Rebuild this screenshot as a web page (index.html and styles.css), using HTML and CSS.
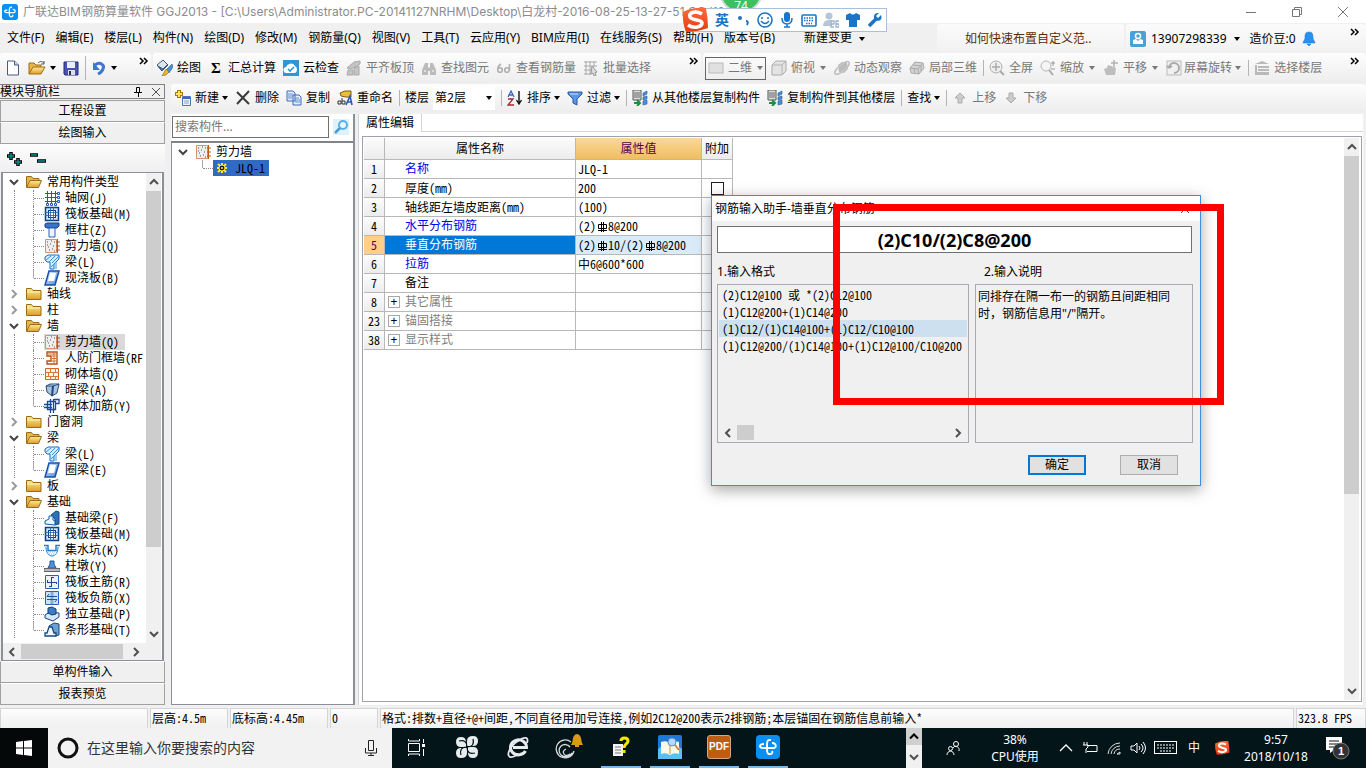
FILE: index.html
```html
<!DOCTYPE html>
<html lang="zh-CN">
<head>
<meta charset="utf-8">
<title>广联达BIM钢筋算量软件 GGJ2013</title>
<link rel="stylesheet" href="styles.css">
</head>
<body>
<svg class="defs" aria-hidden="true">
<defs>
<linearGradient id="gold" x1="0" y1="0" x2="0" y2="1"><stop offset="0" stop-color="#ffe9a0"/><stop offset="1" stop-color="#dd9d22"/></linearGradient>
<linearGradient id="bluey" x1="0" y1="0" x2="1" y2="1"><stop offset="0" stop-color="#e4f3ff"/><stop offset="1" stop-color="#3f86d8"/></linearGradient>
<linearGradient id="sg" x1="0" y1="0" x2="0" y2="1"><stop offset="0" stop-color="#ff6a3c"/><stop offset="1" stop-color="#e83a10"/></linearGradient>
</defs>
<symbol id="logo" viewBox="0 0 24 24"><rect width="24" height="24" rx="4" fill="#0a90f0"/><path d="M15 5q-4-1-4 4v6q0 5 4 4 2-1 1-3M8 9q-4 0-4 2t3 2h11q3-1 1-4-1-1-3-1" fill="none" stroke="#fff" stroke-width="1.900"/></symbol>
<symbol id="new" viewBox="0 0 16 16"><path d="M2.500 1h7l4 4v10h-11z" fill="#fff" stroke="#4a5a78"/><path d="M9.500 1v4h4" fill="#ccd8ec" stroke="#4a5a78"/></symbol>
<symbol id="open" viewBox="0 0 18 16"><path d="M1 14V3h5l2 2h5v3" fill="#e8b54a" stroke="#a06c10"/><path d="M1 14l4-7h12l-4 7z" fill="url(#gold)" stroke="#a06c10"/><path d="M10 3c2-2 4-2 6 0m0-2v3h-3" fill="none" stroke="#555"/></symbol>
<symbol id="save" viewBox="0 0 16 16"><path d="M1 2h14v13H2l-1-1z" fill="#4a50b8" stroke="#252a80"/><path d="M4 2h8v6H4z" fill="#e8eefa"/><path d="M5 10h7v5H5z" fill="#dde"/><path d="M6 11h2v4H6z" fill="#333"/></symbol>
<symbol id="undo" viewBox="0 0 16 16"><path d="M4 5c5-4 10 0 8 4-1 3-3 4-5 5" fill="none" stroke="#3c78d0" stroke-width="3"/><path d="M2 2v8h7z" fill="#3c78d0"/></symbol>
<symbol id="paint" viewBox="0 0 16 16"><path d="M0 5l6-5 5 5-6 6z" fill="#dbe6f2" stroke="#3c5878"/><path d="M1 6l5 3 4-4-5 6z" stroke="#3c5878" fill="#4f7fae"/><path d="M15 4l-6 6 3 3 4-6z" fill="#4b8fd2" stroke="#2b5c90" stroke-width=".6"/><path d="M9 9l3 3-3 3-4 1z" fill="#edb52e" stroke="#8a6a10" stroke-width=".6"/></symbol>
<symbol id="cloud" viewBox="0 0 16 16"><rect width="16" height="16" fill="#2c97d8"/><path d="M4 13a3 3 0 0 1-1-6 5 5 0 0 1 9-1 4 4 0 0 1 0 7z" fill="#fff"/><path d="M5 9l2 2 4-4" stroke="#2c97d8" stroke-width="1.600" fill="none"/></symbol>
<symbol id="level" viewBox="0 0 16 16"><path d="M1 8l7-6 6-1v3L5 9zM2 10h5v5H1zM8 8l5-2v9H8z" fill="#c4c4c4" stroke="#aaa"/></symbol>
<symbol id="find" viewBox="0 0 16 16"><path d="M4 3h3v4l1 1 1-1V3h3l3 7v5H9v-4H7v4H1v-5z" fill="#bbb"/><path d="M3 11h2M11 11h2" stroke="#fff"/></symbol>
<symbol id="glasses" viewBox="0 0 16 16"><g fill="none" stroke="#b0b0b0" stroke-width="1.600"><circle cx="4" cy="10" r="2.300"/><circle cx="11" cy="10" r="2.300"/><path d="M2 9c0-3 1-4 3-5M13.500 10V4"/></g></symbol>
<symbol id="batch" viewBox="0 0 16 16"><path d="M1 2h13M1 6h13M1 10h8M1 14h7M3 1v14M7 1v14M11 1v6" stroke="#aaa" fill="none"/><path d="M9 6l5 6-2 .5 1 3-2 .5-1-3-2 1z" fill="#ddd" stroke="#999"/></symbol>
<symbol id="plane" viewBox="0 0 16 16"><rect x="1" y="3" width="14" height="10" fill="#e0e0e0" stroke="#bbb"/></symbol>
<symbol id="cube" viewBox="0 0 16 16"><path d="M1 5l4-4h10v10l-4 4H1z" fill="#e3e3e3" stroke="#aaa"/><path d="M1 5h10v10M11 5l4-4" fill="none" stroke="#b4b4b4"/></symbol>
<symbol id="orbit" viewBox="0 0 16 16"><path d="M4 5l4-3 5 1 1 6-4 4-5-1z" fill="#bbb"/><ellipse cx="8" cy="8" rx="9" ry="3" fill="none" stroke="#c4c4c4" stroke-width="1.600" transform="rotate(-40 8 8)"/></symbol>
<symbol id="local" viewBox="0 0 16 16"><path d="M1 8l5-6 8 1 1 5-5 6-8-1z" fill="#d4d4d4" stroke="#aaa"/><path d="M1 8l8 1 1 5M9 9l5-6M5 8l1 5M4 5l8 1v5" fill="none" stroke="#aaa"/></symbol>
<symbol id="full" viewBox="0 0 16 16"><circle cx="7" cy="7" r="6" fill="#eee" stroke="#b0b0b0"/><path d="M7 3v8M3 7h8" stroke="#aaa" stroke-width="1.500"/><path d="M11 11l4 4" stroke="#aaa" stroke-width="2"/></symbol>
<symbol id="zoom" viewBox="0 0 16 16"><circle cx="6" cy="6" r="5" fill="#f4f4f4" stroke="#b8b8b8"/><path d="M9 10l4 5" stroke="#aaa" stroke-width="2"/><path d="M13 1v5M11 3h4M11 9h4" stroke="#999"/></symbol>
<symbol id="pan" viewBox="0 0 16 16"><path d="M3 15l-2-6 3-1 1-3 3 1 5 2-1 7z" fill="#bdbdbd"/><path d="M11 0v7M8 3h7" stroke="#b0b0b0" stroke-width="1.500"/></symbol>
<symbol id="rot" viewBox="0 0 16 16"><rect x="1" y="1" width="14" height="14" fill="#f0f0f0" stroke="#bbb"/><path d="M3 8a5 5 0 1 1 5 5M3 8l-2-2M3 8l3-2" fill="none" stroke="#aaa" stroke-width="2"/></symbol>
<symbol id="floors" viewBox="0 0 16 16"><path d="M8 1l7 3H1zM4 6h11v2H4zM4 9h11v2H4zM1 12h14v3H1zM1 5h2v7H1z" fill="#b9b9b9"/></symbol>
<symbol id="add" viewBox="0 0 16 16"><path d="M4 0v8M0 4h8" stroke="#a87800" stroke-width="4"/><path d="M4 1v6M1 4h6" stroke="#ffe45a" stroke-width="2"/><path d="M7.500 6.500h8v9h-8z" fill="#eaf2ff" stroke="#4c76bc"/><path d="M8 8h7" stroke="#3a68b8" stroke-width="2"/><path d="M9 11h5M9 13h5" stroke="#8aa"/></symbol>
<symbol id="del" viewBox="0 0 16 16"><path d="M2 2l12 12M14 1L2 14" stroke="#3c3c3c" stroke-width="2"/></symbol>
<symbol id="copy" viewBox="0 0 16 16"><path d="M1 1h6l2 2v8H1zM7 5h6l2 2v8H7z" fill="#e7f0ff" stroke="#3a68b8"/><path d="M2 4h5M2 6h5M2 8h4M9 8h4M9 10h5M9 12h5" stroke="#5c8ad4"/></symbol>
<symbol id="rename" viewBox="0 0 16 16"><path d="M3 3l5-2h6v6H9L4 6z" fill="#e9bf3c" stroke="#7a6010"/><path d="M9 15l4-9 2 9M10 12h4" fill="none" stroke="#2c58b8" stroke-width="1.600"/><path d="M1 11h3v3H1zM5 8v6h3v-3H5" fill="none" stroke="#333"/></symbol>
<symbol id="sort" viewBox="0 0 16 16"><path d="M1 7l3-6 3 6M2 5h4" fill="none" stroke="#3868b8" stroke-width="1.300"/><path d="M1 9h5l-5 6h6" fill="none" stroke="#a02830" stroke-width="1.300"/><path d="M12 1v12M9.500 10l2.500 4 2.500-4" fill="none" stroke="#111" stroke-width="1.400"/></symbol>
<symbol id="filter" viewBox="0 0 16 16"><path d="M1 2h14v2l-5 5v6l-4-2V9L1 4z" fill="#5a96e4" stroke="#2458a8"/><path d="M3 4h8" stroke="#c8e0ff"/></symbol>
<symbol id="fcopy" viewBox="0 0 16 16"><path d="M1 0h8v10H1z" fill="#ddd" stroke="#555"/><path d="M2 3h6M2 5h6M2 7h6" stroke="#666"/><path d="M11 3l4-2v3l-4 2zM11 7l4-1v3l-4 1zM11 11l4-1v4l-4 1z" fill="#4a90d8" stroke="#265a98" stroke-width=".6"/><path d="M2 13h5M5 10l3 3-3 3" stroke="#1c9040" stroke-width="2" fill="none"/></symbol>
<symbol id="up" viewBox="0 0 16 16"><path d="M8 3l5 5h-3v5H6V8H3z" fill="#ccc" stroke="#aaa"/></symbol>
<symbol id="down" viewBox="0 0 16 16"><path d="M8 13l5-5h-3V3H6v5H3z" fill="#ccc" stroke="#aaa"/></symbol>
<symbol id="fo" viewBox="0 0 16 16"><path d="M.5 13V2.500h5l1.500 2h6V7" fill="#e8b54a" stroke="#9c6c14"/><path d="M.5 13.500L4 6.500h11.500l-3 7z" fill="url(#gold)" stroke="#9c6c14"/></symbol>
<symbol id="fc" viewBox="0 0 16 16"><path d="M.5 13.500V2.500h5l1.500 2h8v9z" fill="url(#gold)" stroke="#9c6c14"/><path d="M1 6h13" stroke="#fff0b8"/></symbol>
<symbol id="grid" viewBox="0 0 16 16"><path d="M3.500 1v12M7.500 1v12M11.500 1v12M1 3.500h12M1 7.500h12M1 11.500h12" stroke="#2458c0"/><path d="M13.500 2.500h2v2h-2zM13.500 6.500h2v2h-2zM13.500 10.500h2v2h-2zM2.500 13.500h2v2h-2zM6.500 13.500h2v2h-2zM10.500 13.500h2v2h-2z" fill="#fff" stroke="#2458c0"/></symbol>
<symbol id="raft" viewBox="0 0 16 16"><rect x="1.500" y="1.500" width="13" height="13" fill="#cfe4fa" stroke="#0c4088" stroke-width="1.500"/><rect x="4.500" y="4.500" width="7" height="7" fill="#fff" stroke="#0c4088"/><path d="M6.500 1v14M9.500 1v14M1 6.500h14M1 9.500h14" stroke="#2060a8" stroke-width=".8"/></symbol>
<symbol id="col" viewBox="0 0 16 16"><path d="M1 2l2-1h12v3l-2 2H3L1 5z" fill="#3a74c8" stroke="#173f88"/><path d="M5 6h6v9H5z" fill="#eaf3ff" stroke="#2c64b8"/></symbol>
<symbol id="wall" viewBox="0 0 16 16"><path d="M1.500 1.500h11v13h-11z" fill="#eee" stroke="#d89070"/><path d="M3 4h1M6 6h1M4 9h1M8 11h1M10 4h1M9 8h1M5 12h1M10 13h1M3 7h1M7 3h1" stroke="#555"/><path d="M13.500 1v14M12 4h4M12 8h4M12 12h4" stroke="#b05c18"/></symbol>
<symbol id="beam" viewBox="0 0 16 16"><path d="M1 3l3-2h11v4l-5 5v5H6V8H3L1 6z" fill="#d5ecff" stroke="#1870c0"/><path d="M2 6l5-4M5 8l6-6M8 9l7-7M7 13l5-5v7" stroke="#3a94dc" fill="none"/></symbol>
<symbol id="slab" viewBox="0 0 16 16"><path d="M5 1h10l-4 14H1z" fill="url(#bluey)" stroke="#1a4fa8" stroke-width="1.500"/><path d="M6 3h6l-2 8H4z" fill="#fff"/></symbol>
<symbol id="frame" viewBox="0 0 16 16"><path d="M3 2h10v12H3v-3h4V6H3z" fill="#fff" stroke="#b85018" stroke-width="1.400"/><path d="M4 4h8M8 6h4M8 8.500h4M5 11h7M10 2v12" stroke="#cc7038"/></symbol>
<symbol id="brick" viewBox="0 0 16 16"><path d="M1.500 2.500h13v11h-13z" fill="#fff3e4" stroke="#c86424"/><path d="M1 6.500h14M1 10.500h14M6.500 2v4M11.500 2v4M4.500 6v4M9.500 6v4M6.500 10v4M11.500 10v4" stroke="#d87838"/></symbol>
<symbol id="dark" viewBox="0 0 16 16"><path d="M2 4l4-2h9l-2 9-5 3-5-4z" fill="#a9c4de" stroke="#2a4a78"/><path d="M2 4h7l6-2" fill="#e4f0fa" stroke="#1f467c"/><path d="M9 4L8 14" stroke="#1f467c" stroke-width="2"/></symbol>
<symbol id="ybar" viewBox="0 0 16 16"><path d="M3.500 3.500h8v8h-8zM0 6.500h8M0 9.500h8M6.500 1v14M9.500 1v14M10 1.500h5v4h-3" fill="none" stroke="#1848a0" stroke-width="1.300"/></symbol>
<symbol id="fbeam" viewBox="0 0 16 16"><path d="M7 5l5-4 3 1v12l-4 1V9z" fill="#2c70b8" stroke="#174880"/><path d="M1 14v-3l4-2V6h4v4l2 1v4z" fill="#eaf4ff" stroke="#175aa0"/></symbol>
<symbol id="pit" viewBox="0 0 16 16"><path d="M0 3.500h4v5h8v-5h4" fill="none" stroke="#2080c8" stroke-width="1.500"/><path d="M2 5c0 12 12 12 12 0" fill="none" stroke="#2080c8"/><path d="M4 10h8M5 12h6" stroke="#78b4e8" stroke-dasharray="1 1"/></symbol>
<symbol id="pier" viewBox="0 0 16 16"><path d="M6 3h4v3l2 4H4l2-4z" fill="#4a94dc" stroke="#2058a0"/><path d="M0 10.500h16v3H0z" fill="#bbb" stroke="#666"/></symbol>
<symbol id="rmain" viewBox="0 0 16 16"><path d="M1.500 1.500h13v13h-13z" fill="#e8f3ff" stroke="#2c60c0"/><path d="M7.500 3v10M3 8.500h10M7.500 3.500H10M5 12.500h3M3.500 8v-2M12.500 8v2" stroke="#1c48a0" fill="none"/></symbol>
<symbol id="rneg" viewBox="0 0 16 16"><path d="M1.500 1.500h13v13h-13z" fill="#cfe2f8" stroke="#2c60c0"/><path d="M8 2v12" stroke="#8cacd0" stroke-width="3"/><path d="M3 6.500h10M3 9.500h10M5 4l-2 2.500M11 12l2-2.500" stroke="#1c5898" fill="none"/></symbol>
<symbol id="ind" viewBox="0 0 16 16"><path d="M1 9l5-3 9 1v4l-6 4-8-3z" fill="#d4e8fa" stroke="#174880"/><path d="M4 2l4-1 4 2v5l-4 1-4-2z" fill="#3c7cc0" stroke="#123c70"/></symbol>
<symbol id="strip" viewBox="0 0 16 16"><path d="M5 4l5-3 5 1v11l-4 1z" fill="#6ba0d0" stroke="#174880"/><path d="M1 14v-3h2l2-6h3l2 6h2v3z" fill="#eef6ff" stroke="#174880" stroke-width="1.300"/></symbol>
<symbol id="gear" viewBox="0 0 16 16"><path d="M8 3v10M3 8h10M4 4l8 8M12 4l-8 8" stroke="#ffee30" stroke-width="2"/><circle cx="8" cy="8" r="3" fill="#222" stroke="#ffee30"/><circle cx="8" cy="8" r="1" fill="#ffee30"/></symbol>
<symbol id="mag" viewBox="0 0 16 16"><rect width="16" height="16" fill="#dff2fc"/><circle cx="10" cy="6" r="4" fill="#eaf7ff" stroke="#58b0e4" stroke-width="2"/><path d="M7 9l-5 5" stroke="#4a9ad8" stroke-width="2.500"/></symbol>
<symbol id="chevd" viewBox="0 0 10 10"><path d="M1 3l4 4 4-4" fill="none" stroke="currentColor" stroke-width="2"/></symbol>
<symbol id="chevr" viewBox="0 0 10 10"><path d="M3 1l4 4-4 4" fill="none" stroke="currentColor" stroke-width="2"/></symbol>
<symbol id="chevl" viewBox="0 0 10 10"><path d="M7 1L3 5l4 4" fill="none" stroke="currentColor" stroke-width="2"/></symbol>
<symbol id="chevu" viewBox="0 0 10 10"><path d="M1 7l4-4 4 4" fill="none" stroke="currentColor" stroke-width="2"/></symbol>
<symbol id="pin" viewBox="0 0 10 10"><path d="M3.500.5h3v5h-3zM1 5.500h8M5.500 6v4M6.500 1v5" fill="none" stroke="#000"/></symbol>
<symbol id="x" viewBox="0 0 10 10"><path d="M1 1l8 8M9 1L1 9" stroke="currentColor" fill="none"/></symbol>
<symbol id="more" viewBox="0 0 10 8"><path d="M1 1l3 3-3 3M5 1l3 3-3 3" fill="none" stroke="#000" stroke-width="1.500"/></symbol>
<symbol id="rebar" viewBox="0 0 12 12"><path d="M2.500 3.500h8v4h-8zM5.500 1v10M7.500 1v10M2 9.500h9" fill="none" stroke="#000"/></symbol>
<symbol id="sogou" viewBox="0 0 28 28"><path d="M2 6Q12 1 25 2q2 11 2 20-11 4-22 4Q1 16 2 6z" fill="url(#sg)"/><path d="M21 8C14 4 7 7 9 11s12 2 12 6-8 6-14 2" fill="none" stroke="#fff" stroke-width="3.600"/></symbol>
</svg>

<header class="titlebar">
  <svg class="ic"><use href="#logo"/></svg>
  <h1 class="title">广联达BIM钢筋算量软件 GGJ2013 - [C:\Users\Administrator.PC-20141127NRHM\Desktop\白龙村-2016-08-25-13-27-51.GGJ12]</h1>
  <div class="winbtns">
    <button aria-label="最小化"><svg viewBox="0 0 12 12"><path d="M1 6.500h10" stroke="#777"/></svg></button>
    <button aria-label="还原"><svg viewBox="0 0 12 12"><path d="M1.500 3.500h7v7h-7zM3.500 3.500v-2h7v7h-2" fill="none" stroke="#777"/></svg></button>
    <button aria-label="关闭"><svg viewBox="0 0 12 12"><path d="M1 1l10 10M11 1L1 11" stroke="#777"/></svg></button>
  </div>
</header>

<div class="menurow">
  <nav class="menu">
    <button>文件(F)</button><button>编辑(E)</button><button>楼层(L)</button><button>构件(N)</button><button>绘图(D)</button><button>修改(M)</button><button>钢筋量(Q)</button><button>视图(V)</button><button>工具(T)</button><button>云应用(Y)</button><button>BIM应用(I)</button><button>在线服务(S)</button><button>帮助(H)</button><button>版本号(B)</button><button class="change">新建变更 <i class="arr"></i></button>
  </nav>
  <a class="tip" href="#">如何快速布置自定义范..</a>
  <div class="account">
    <svg class="ic" viewBox="0 0 16 16"><rect width="16" height="16" rx="2" fill="#4aa2d4"/><circle cx="8" cy="5" r="2.500" fill="none" stroke="#fff" stroke-width="1.500"/><path d="M3 9l3-1 2 2 2-2 3 1v4H3z" fill="#fff"/></svg>
    <button>13907298339<i class="arr"></i></button>
    <span>造价豆:0</span>
    <svg class="ic" viewBox="0 0 16 16"><path d="M8 1c4 0 4 3 4 6 0 2 2 3 2 5H2c0-2 2-3 2-5 0-3 0-6 4-6zM6 13h4l-2 2z" fill="#2890f0" stroke="#1c70cc" stroke-width=".5"/></svg>
    <svg class="more push"><use href="#more"/></svg>
  </div>
</div>

<div class="toolrow">
  <div class="bar file">
    <button aria-label="新建"><svg class="ic"><use href="#new"/></svg></button>
    <button class="tb" aria-label="打开"><svg class="ic wide"><use href="#open"/></svg><i class="arr"></i></button>
    <button aria-label="保存"><svg class="ic"><use href="#save"/></svg></button>
    <i class="sep tall"></i>
    <button class="tb" aria-label="撤销"><svg class="ic"><use href="#undo"/></svg><i class="arr"></i></button>
    <svg class="more push"><use href="#more"/></svg>
  </div>
  <div class="bar draw">
    <button class="tb"><svg class="ic"><use href="#paint"/></svg>绘图</button>
    <button class="tb"><b class="sigma">Σ</b>汇总计算</button>
    <button class="tb"><svg class="ic"><use href="#cloud"/></svg>云检查</button>
    <button class="tb" disabled><svg class="ic"><use href="#level"/></svg>平齐板顶</button>
    <button class="tb" disabled><svg class="ic"><use href="#find"/></svg>查找图元</button>
    <button class="tb" disabled><svg class="ic"><use href="#glasses"/></svg>查看钢筋量</button>
    <button class="tb" disabled><svg class="ic"><use href="#batch"/></svg>批量选择</button>
    <svg class="more push"><use href="#more"/></svg>
  </div>
  <div class="bar view">
    <button class="tb boxed" disabled><svg class="ic"><use href="#plane"/></svg>二维<i class="arr"></i></button>
    <button class="tb" disabled><svg class="ic"><use href="#cube"/></svg>俯视<i class="arr"></i></button>
    <button class="tb" disabled><svg class="ic"><use href="#orbit"/></svg>动态观察</button>
    <button class="tb" disabled><svg class="ic"><use href="#local"/></svg>局部三维</button>
    <i class="sep"></i>
    <button class="tb" disabled><svg class="ic"><use href="#full"/></svg>全屏</button>
    <button class="tb" disabled><svg class="ic"><use href="#zoom"/></svg>缩放<i class="arr"></i></button>
    <button class="tb" disabled><svg class="ic"><use href="#pan"/></svg>平移<i class="arr"></i></button>
    <button class="tb tight" disabled><svg class="ic"><use href="#rot"/></svg>屏幕旋转<i class="arr"></i></button>
    <i class="sep"></i>
    <button class="tb" disabled><svg class="ic"><use href="#floors"/></svg>选择楼层</button>
    <svg class="more push"><use href="#more"/></svg>
  </div>
</div>

<main class="main">
  <aside class="side">
    <div class="side-head"><span>模块导航栏</span><svg class="sm"><use href="#pin"/></svg><svg class="sm"><use href="#x"/></svg></div>
    <button class="acc">工程设置</button>
    <button class="acc">绘图输入</button>
    <div class="pm"><svg viewBox="0 0 42 16" width="42" height="16"><path d="M5 1v8M1 5h8M12 7v8M8 11h8M24 4h8M31 10h9" stroke="#000" stroke-width="3.500"/><path d="M5 2v6M2 5h6M12 8v6M9 11h6M25 4h6M32 10h7" stroke="#0a9090" stroke-width="1.500"/></svg></div>
    <div class="treebox">
      <div class="treemid">
        <ul class="tree">
          <li class="r"><svg class="ch"><use href="#chevd"/></svg><svg class="ic"><use href="#fo"/></svg>常用构件类型
            <ul>
              <li><svg class="ic"><use href="#grid"/></svg>轴网<span class="m">(J)</span></li>
              <li><svg class="ic"><use href="#raft"/></svg>筏板基础<span class="m">(M)</span></li>
              <li><svg class="ic"><use href="#col"/></svg>框柱<span class="m">(Z)</span></li>
              <li><svg class="ic"><use href="#wall"/></svg>剪力墙<span class="m">(Q)</span></li>
              <li><svg class="ic"><use href="#beam"/></svg>梁<span class="m">(L)</span></li>
              <li><svg class="ic"><use href="#slab"/></svg>现浇板<span class="m">(B)</span></li>
            </ul></li>
          <li class="r shut"><svg class="ch"><use href="#chevr"/></svg><svg class="ic"><use href="#fc"/></svg>轴线</li>
          <li class="r shut"><svg class="ch"><use href="#chevr"/></svg><svg class="ic"><use href="#fc"/></svg>柱</li>
          <li class="r"><svg class="ch"><use href="#chevd"/></svg><svg class="ic"><use href="#fo"/></svg>墙
            <ul>
              <li><span class="cur"><svg class="ic"><use href="#wall"/></svg>剪力墙<span class="m">(Q)</span></span></li>
              <li><svg class="ic"><use href="#frame"/></svg>人防门框墙<span class="m">(RF</span></li>
              <li><svg class="ic"><use href="#brick"/></svg>砌体墙<span class="m">(Q)</span></li>
              <li><svg class="ic"><use href="#dark"/></svg>暗梁<span class="m">(A)</span></li>
              <li><svg class="ic"><use href="#ybar"/></svg>砌体加筋<span class="m">(Y)</span></li>
            </ul></li>
          <li class="r shut"><svg class="ch"><use href="#chevr"/></svg><svg class="ic"><use href="#fc"/></svg>门窗洞</li>
          <li class="r"><svg class="ch"><use href="#chevd"/></svg><svg class="ic"><use href="#fo"/></svg>梁
            <ul>
              <li><svg class="ic"><use href="#beam"/></svg>梁<span class="m">(L)</span></li>
              <li><svg class="ic"><use href="#slab"/></svg>圈梁<span class="m">(E)</span></li>
            </ul></li>
          <li class="r shut"><svg class="ch"><use href="#chevr"/></svg><svg class="ic"><use href="#fc"/></svg>板</li>
          <li class="r"><svg class="ch"><use href="#chevd"/></svg><svg class="ic"><use href="#fo"/></svg>基础
            <ul>
              <li><svg class="ic"><use href="#fbeam"/></svg>基础梁<span class="m">(F)</span></li>
              <li><svg class="ic"><use href="#raft"/></svg>筏板基础<span class="m">(M)</span></li>
              <li><svg class="ic"><use href="#pit"/></svg>集水坑<span class="m">(K)</span></li>
              <li><svg class="ic"><use href="#pier"/></svg>柱墩<span class="m">(Y)</span></li>
              <li><svg class="ic"><use href="#rmain"/></svg>筏板主筋<span class="m">(R)</span></li>
              <li><svg class="ic"><use href="#rneg"/></svg>筏板负筋<span class="m">(X)</span></li>
              <li><svg class="ic"><use href="#ind"/></svg>独立基础<span class="m">(P)</span></li>
              <li><svg class="ic"><use href="#strip"/></svg>条形基础<span class="m">(T)</span></li>
            </ul></li>
        </ul>
        <div class="vs"><svg class="sm"><use href="#chevu"/></svg><i class="thumb t1"></i><svg class="sm"><use href="#chevd"/></svg></div>
      </div>
      <div class="hs"><svg class="sm"><use href="#chevl"/></svg><i class="thumb"></i><svg class="sm"><use href="#chevr"/></svg></div>
    </div>
    <button class="acc">单构件输入</button>
    <button class="acc">报表预览</button>
  </aside>

  <section class="work">
    <div class="bar edit">
      <button class="tb"><svg class="ic"><use href="#add"/></svg>新建<i class="arr"></i></button>
      <button class="tb"><svg class="ic"><use href="#del"/></svg>删除</button>
      <button class="tb"><svg class="ic"><use href="#copy"/></svg>复制</button>
      <button class="tb"><svg class="ic"><use href="#rename"/></svg>重命名</button>
      <i class="sep"></i>
      <label class="floor">楼层<span class="pick"><select><option>第2层</option></select><i class="arr"></i></span></label>
      <i class="sep"></i>
      <button class="tb"><svg class="ic"><use href="#sort"/></svg>排序<i class="arr"></i></button>
      <button class="tb"><svg class="ic"><use href="#filter"/></svg>过滤<i class="arr"></i></button>
      <i class="sep"></i>
      <button class="tb"><svg class="ic"><use href="#fcopy"/></svg>从其他楼层复制构件</button>
      <button class="tb"><svg class="ic"><use href="#fcopy"/></svg>复制构件到其他楼层</button>
      <i class="sep"></i>
      <button class="tb">查找<i class="arr"></i></button>
      <i class="sep"></i>
      <button class="tb" disabled><svg class="ic"><use href="#up"/></svg>上移</button>
      <button class="tb" disabled><svg class="ic"><use href="#down"/></svg>下移</button>
    </div>
    <div class="panes">
      <div class="comp">
        <div class="search"><input type="text" placeholder="搜索构件..." aria-label="搜索构件"><button aria-label="搜索"><svg class="ic"><use href="#mag"/></svg></button></div>
        <ul class="tree comptree">
          <li class="r"><svg class="ch"><use href="#chevd"/></svg><svg class="ic"><use href="#wall"/></svg>剪力墙
            <ul class="plain"><li><span class="picked"><svg class="ic"><use href="#gear"/></svg><span class="m">JLQ-1</span></span></li></ul></li>
        </ul>
      </div>
      <div class="props">
        <div class="tabs"><button class="tab">属性编辑</button></div>
        <div class="sheet">
          <div class="gridwrap">
            <table class="grid">
              <colgroup><col class="c1"><col class="c2"><col class="c3"><col class="c4"></colgroup>
              <thead><tr><th></th><th>属性名称</th><th class="hot">属性值</th><th>附加</th></tr></thead>
              <tbody>
                <tr><th>1</th><td class="blue">名称</td><td><span class="m">JLQ-1</span></td><td></td></tr>
                <tr><th>2</th><td>厚度<span class="m">(mm)</span></td><td><span class="m">200</span></td><td><input type="checkbox" aria-label="附加 厚度"></td></tr>
                <tr><th>3</th><td>轴线距左墙皮距离<span class="m">(mm)</span></td><td><span class="m">(100)</span></td><td></td></tr>
                <tr><th>4</th><td class="blue">水平分布钢筋</td><td><span class="m">(2)</span><svg class="rb"><use href="#rebar"/></svg><span class="m">8@200</span></td><td></td></tr>
                <tr class="on"><th>5</th><td>垂直分布钢筋</td><td><span class="m">(2)</span><svg class="rb"><use href="#rebar"/></svg><span class="m">10/(2)</span><svg class="rb"><use href="#rebar"/></svg><span class="m">8@200</span></td><td></td></tr>
                <tr><th>6</th><td class="blue">拉筋</td><td>中<span class="m">6@600*600</span></td><td></td></tr>
                <tr><th>7</th><td>备注</td><td></td><td></td></tr>
                <tr class="grp"><th>8</th><td><button aria-label="展开">+</button>其它属性</td><td></td><td></td></tr>
                <tr class="grp"><th>23</th><td><button aria-label="展开">+</button>锚固搭接</td><td></td><td></td></tr>
                <tr class="grp"><th>38</th><td><button aria-label="展开">+</button>显示样式</td><td></td><td></td></tr>
              </tbody>
            </table>
            <div class="vs"><svg class="sm"><use href="#chevu"/></svg><i class="thumb t2"></i><svg class="sm"><use href="#chevd"/></svg></div>
          </div>
        </div>
      </div>
    </div>
  </section>
</main>

<footer class="status">
  <span class="s1"></span>
  <span class="s2">层高<span class="m">:4.5m</span></span>
  <span class="s3">底标高<span class="m">:4.45m</span></span>
  <span class="s4"><span class="m">0</span></span>
  <span class="s5">格式<span class="m">:</span>排数<span class="m">+</span>直径<span class="m">+@+</span>间距<span class="m">,</span>不同直径用加号连接<span class="m">,</span>例如<span class="m">2C12@200</span>表示<span class="m">2</span>排钢筋<span class="m">;</span>本层锚固在钢筋信息前输入<span class="m">*</span></span>
  <span class="s6"><span class="m">323.8 FPS</span></span>
</footer>

<div class="taskbar">
  <button class="start" aria-label="开始"><svg viewBox="0 0 16 16" width="16" height="16"><path d="M0 2l7-1v6.500H0zM8 1l8-1v7.500H8zM0 8.500h7V15l-7-1zM8 8.500h8V16l-8-1z" fill="#fff"/></svg></button>
  <label class="find">
    <svg viewBox="0 0 22 22" width="22" height="22"><circle cx="11" cy="11" r="9" fill="none" stroke="#111" stroke-width="3"/></svg>
    <input type="text" placeholder="在这里输入你要搜索的内容" aria-label="搜索">
    <svg viewBox="0 0 14 18" width="14" height="18"><path d="M4.500 1.500h5v10h-5zM1.500 9v5h11V9M7 14v3M4 16.500h6" fill="none" stroke="#222"/></svg>
  </label>
  <div class="apps">
    <button aria-label="任务视图"><svg viewBox="0 0 24 24"><path d="M4.500 8.500h11v8h-11zM4.500 4v2h11V4M4.500 21v-2h11v2M19.500 4v4M19.500 14v7" fill="none" stroke="#fff"/><path d="M18 9h3v3h-3z" fill="#fff"/></svg></button>
    <button aria-label="云盘"><svg viewBox="0 0 24 24"><g fill="#e8ecee"><path d="M1 7q0-5 5-5t5 5v5H6Q1 12 1 7z"/><path d="M18 1q5 0 5 5t-5 5h-6V6q0-5 6-5z"/><path d="M23 17q0 6-5 6t-5-5v-6h5q5 0 5 5z"/><path d="M6 23q-5 0-5-5t5-5h6v5q0 5-6 5z"/></g><path d="M4 6q8-2 8 6 0 8 8 6M6 20q-2-8 6-8t6-8" fill="none" stroke="#04151a" stroke-width="1.200"/></svg></button>
    <button aria-label="浏览器"><svg viewBox="0 0 24 24"><path d="M19.500 16a8 7.500 0 1 1 1-3.500H7" fill="none" stroke="#e8ecee" stroke-width="3"/><path d="M21 8c2-6-2-7-9-2C4 11 0 20 4 22c2 1 5-1 7-2" fill="none" stroke="#e8ecee" stroke-width="1.800"/></svg></button>
    <button aria-label="提醒"><svg class="bellapp" viewBox="0 0 28 26"><path d="M19 17a9 9 0 1 1-3-9M15 13a6 6 0 1 0 0 7q-4 3-6 0t2-5M17 19q-5 6-10 3" fill="none" stroke="#d4dadc" stroke-width="1.300"/><path d="M22 0c5 1 4 7 5 9l1 2H16l1-2c1-2 0-8 5-9zM20 11h4v2h-4z" fill="#d89c14"/></svg></button>
    <button class="run" aria-label="帮助"><svg viewBox="0 0 24 24"><path d="M4 9h10v12H4z" fill="#f4f4f4"/><path d="M6 12h6M6 15h6M6 18h6" stroke="#777"/><path d="M12 6c0-4 7-4 7 0 0 3-4 3-4 7M15 15v3" stroke="#f4e800" stroke-width="3" fill="none"/></svg></button>
    <button class="run" aria-label="词典"><svg viewBox="0 0 24 24"><rect width="24" height="24" rx="2" fill="#1d78d8"/><path d="M0 14q12-10 24 0v10H0z" fill="#5ac0f4"/><path d="M3 7q5-2 9 1 4-3 9-1v12q-5-2-9 1-4-3-9-1z" fill="#fff8e4"/><path d="M12 8v11" stroke="#c09850"/><circle cx="14" cy="7" r="4" fill="#b4dcff" stroke="#5a8ccc"/><path d="M17 10l4 5" stroke="#d08830" stroke-width="2"/></svg></button>
    <button class="run" aria-label="PDF"><span class="pdf">PDF</span></button>
    <button class="run" aria-label="广联达"><svg><use href="#logo"/></svg></button>
  </div>
  <div class="tscroll"><svg class="sm"><use href="#chevu"/></svg><svg class="sm"><use href="#chevd"/></svg></div>
  <div class="tray">
    <svg viewBox="0 0 16 16"><path d="M2 15c0-5 7-5 7 0M8 8c1-3 7-2 6 3" fill="none" stroke="#fff"/><circle cx="5.500" cy="8.500" r="2" fill="none" stroke="#fff"/><circle cx="11" cy="4" r="2.500" fill="none" stroke="#fff"/></svg>
    <div class="two cpu"><span>38%</span><span>CPU使用</span></div>
    <svg viewBox="0 0 16 16"><path d="M2 11l6-6 6 6" fill="none" stroke="#fff" stroke-width="1.300"/></svg>
    <svg viewBox="0 0 16 16"><path d="M5 5.500h10v6H5M2 2v3M5 2v3M1 5h5v2l-2 2v4" fill="none" stroke="#fff"/></svg>
    <svg viewBox="0 0 16 16"><path d="M2 14A12 12 0 0 1 14 3M5 14a9 9 0 0 1 9-8M8 14a6 6 0 0 1 6-5M11 14l3-2v2z" fill="none" stroke="#ddd"/></svg>
    <svg viewBox="0 0 16 16"><path d="M1 6h3l3-3v10l-3-3H1zM9 6q2 2 0 4M11 4q4 4 0 8M13 2q5 6 0 12" fill="none" stroke="#fff"/></svg>
    <svg class="kb" viewBox="0 0 24 14"><rect x=".5" y=".5" width="22" height="12" fill="none" stroke="#fff"/><path d="M3 4h17M3 7h17M6 10h11" stroke="#fff" stroke-dasharray="2 1"/></svg>
    <span class="zh">中</span>
    <svg><use href="#sogou"/></svg>
    <div class="two clock"><span>9:57</span><span>2018/10/18</span></div>
    <svg class="note" viewBox="0 0 24 24"><path d="M0 1h16v13H8l-4 3v-3H0z" fill="#fff"/><path d="M3 5h10M3 8h10M3 11h6" stroke="#111"/><circle cx="15" cy="15" r="8" fill="#333" stroke="#777"/><text x="15" y="19" class="one">1</text></svg>
  </div>
</div>

<div class="ball">74</div>
<div class="ime">
  <svg class="brand"><use href="#sogou"/></svg>
  <b>英</b>
  <svg viewBox="0 0 16 16"><circle cx="5" cy="6" r="2" fill="#1b74c8"/><path d="M11 9q3 0 1 4" stroke="#1b74c8" stroke-width="2" fill="none"/></svg>
  <svg viewBox="0 0 16 16"><circle cx="8" cy="8" r="7" fill="none" stroke="#1b74c8" stroke-width="1.600"/><path d="M5 5v2M11 5v2M4 9q4 5 8 0" stroke="#1b74c8" stroke-width="1.500" fill="none"/></svg>
  <svg viewBox="0 0 16 16"><rect x="5" y="0" width="6" height="10" rx="3" fill="#1b74c8"/><path d="M3 6q0 6 5 6t5-6M8 12v3M5 15h6" stroke="#1b74c8" stroke-width="1.500" fill="none"/></svg>
  <svg viewBox="0 0 16 16"><rect x="1" y="3" width="14" height="11" rx="1" fill="none" stroke="#1b74c8" stroke-width="1.600"/><path d="M3 6h10M3 8.500h10M5 11.500h6" stroke="#1b74c8" stroke-width="1.500" stroke-dasharray="1.500 1"/></svg>
  <svg viewBox="0 0 16 16"><circle cx="6" cy="4" r="3.500" fill="#b4c6d8"/><path d="M0 14q0-6 6-6h3v6z" fill="#b4c6d8"/><path d="M8 9h3v3H8v3h3M16 9h-3v6h3v-3h-3" fill="none" stroke="#9cb4cc" stroke-width="1.300"/></svg>
  <svg viewBox="0 0 16 16"><path d="M1 3l4-2q3 3 6 0l4 2v5h-3v7H4V8H1z" fill="#1b74c8"/></svg>
  <svg viewBox="0 0 16 16"><path d="M2 14l7-7" stroke="#1b74c8" stroke-width="3.500"/><path d="M14 3l-3 3-2-2 3-3q-6-1-5 6l4 2q5-1 3-6z" fill="#1b74c8"/></svg>
</div>

<div class="dialog" role="dialog" aria-label="钢筋输入助手">
  <div class="dlg-title"><span>钢筋输入助手-墙垂直分布钢筋</span><button aria-label="关闭"><svg class="sm"><use href="#x"/></svg></button></div>
  <div class="dlg-body">
    <input class="expr" type="text" value="(2)C10/(2)C8@200" aria-label="钢筋信息">
    <div class="cols">
      <div class="fmt">
        <h2>1.输入格式</h2>
        <div class="panel">
          <ul class="opts">
            <li><span class="m">(2)C12@100 </span>或<span class="m"> *(2)C12@100</span></li>
            <li><span class="m">(1)C12@200+(1)C14@200</span></li>
            <li class="sel"><span class="m">(1)C12/(1)C14@100+(1)C12/C10@100</span></li>
            <li><span class="m">(1)C12@200/(1)C14@100+(1)C12@100/C10@200</span></li>
          </ul>
          <div class="hs"><svg class="sm"><use href="#chevl"/></svg><i class="thumb"></i><svg class="sm push"><use href="#chevr"/></svg></div>
        </div>
      </div>
      <div class="desc">
        <h2>2.输入说明</h2>
        <div class="panel"><p>同排存在隔一布一的钢筋且间距相同时，钢筋信息用"/"隔开。</p></div>
      </div>
    </div>
    <div class="btns"><button class="ok">确定</button><button>取消</button></div>
  </div>
</div>
<div class="mark"></div>
</body>
</html>
```
FILE: styles.css
```css
* { box-sizing: border-box; }
html, body { height: 100%; }
body {
  margin: 0;
  display: flex;
  flex-direction: column;
  overflow: hidden;
  position: relative;
  background: #f0f0f0;
  color: #000;
  font: 12px/16px "Noto Sans", "Noto Sans CJK SC", sans-serif;
}
button, input, select { font: inherit; color: inherit; }
button { background: none; border: 0; padding: 0; white-space: nowrap; }
ul { list-style: none; margin: 0; padding: 0; }
h1, h2, p { margin: 0; font-size: 12px; font-weight: 400; }
svg { display: block; flex: none; }
.defs { position: absolute; width: 0; height: 0; }
.ic { width: 16px; height: 16px; }
.wide { width: 18px; }
.sm { width: 10px; height: 10px; color: #505050; }
.more { width: 10px; height: 8px; }
.push { margin-left: auto; }
.m { font-family: "Noto Sans CJK SC", sans-serif; font-feature-settings: "hwid"; white-space: pre; }
.arr { width: 0; border: 3px solid transparent; border-top: 4px solid currentColor; border-bottom: 0; display: inline-block; flex: none; vertical-align: middle; }

/* title and menus */
.titlebar { display: flex; align-items: center; gap: 5px; height: 23px; padding-left: 2px; background: #fff; flex: none; }
.title { color: #8c8c8c; white-space: nowrap; font-family: Inter, "Noto Sans CJK SC", sans-serif; }
.winbtns { margin-left: auto; display: flex; }
.winbtns button { width: 46px; display: grid; place-items: center; }
.winbtns svg { width: 12px; height: 12px; }
.menurow { display: flex; height: 30px; flex: none; gap: 2px; }
.menu { display: flex; flex: 1; align-items: center; gap: 11px; padding-left: 7px; }
.menu .change { margin-left: 18px; }
.menu .change .arr { margin-left: 4px; }
.tip, .account { background: linear-gradient(#fbfbfb, #f1f1f1); display: flex; align-items: center; margin-top: 1px; border-radius: 3px; }
.tip { width: 187px; padding-left: 28px; color: #5c2c00; text-decoration: none; }
.account { width: 240px; padding: 0 6px 0 4px; gap: 5px; }
.account .arr { margin: 0 5px 0 7px; }
.account .push, .bar .push { align-self: flex-start; margin-top: 4px; }

/* toolbars */
.toolrow { display: flex; flex: none; height: 30px; gap: 2px; margin-bottom: 1px; }
.bar { display: flex; align-items: center; gap: 7px; background: linear-gradient(#fdfdfd, #ededed); border-radius: 3px; min-width: 0; }
.tb { display: flex; align-items: center; gap: 4px; }
.tb:disabled { color: #787878; }
.file { width: 151px; padding: 0 2px 0 5px; }
.draw { width: 548px; padding: 0 2px 0 4px; }
.view { flex: 1; padding: 0 6px 0 2px; }
.view .arr { margin: 0 1px; }
.view .tight { gap: 2px; }
.edit { padding-left: 4px; height: 28px; flex: none; }
.edit .tb .arr { margin-left: -1px; }
.sigma { width: 16px; font: bold 15px/16px "Liberation Serif", serif; }
.sep { width: 1px; height: 16px; background: #b4b4b4; margin: 0 -2px 0 -1px; flex: none; }
.tall { height: 24px; }
.boxed { border: 1px solid #666; height: 23px; padding: 0 1px 0 2px; margin-right: -2px; }
.floor { display: flex; align-items: center; gap: 4px; }
.pick { display: flex; align-items: center; background: #fff; height: 24px; padding: 0 3px 0 2px; }
.pick select { appearance: none; border: 0; background: none; padding: 0; width: 51px; }

/* navigation */
.main { flex: 1; display: flex; min-height: 0; gap: 6px; padding-bottom: 3px; }
.side { width: 165px; display: flex; flex-direction: column; flex: none; }
.side-head { display: flex; align-items: center; height: 15px; border: 1px solid #808080; border-left: 0; gap: 8px; padding-right: 3px; flex: none; }
.side-head span { flex: 1; }
.acc { flex: none; height: 22px; border: 1px solid #a0a0a0; border-top-color: #fff; background: #f0f0f0; }
.side-head + .acc { margin-top: 1px; border-top-color: #a0a0a0; }
.pm { height: 28px; padding: 7px 6px 0; background: linear-gradient(#fdfdfd, #efefef); flex: none; }
.treebox { flex: 1; min-height: 0; display: flex; flex-direction: column; background: #fff; border: 2px solid #8a8f98; border-width: 1px 2px; margin: 0 1px; padding-right: 1px; }
.treemid { flex: 1; min-height: 0; display: flex; }
.tree { flex: 1; min-width: 0; overflow: hidden; white-space: nowrap; padding-top: 1px; }
.treebox .tree { padding-left: 6px; }
.tree svg { display: inline-block; vertical-align: top; }
.tree .ch { width: 10px; height: 10px; margin: 3px 7px 0 0; color: #444; }
.shut > .ch { color: #999; }
.tree .ic { margin-right: 5px; }
.tree li { line-height: 16px; }
.r > ul { margin-left: 5px; border-left: 1px dotted #888; padding-left: 18px; }
.r > .plain { border-left-color: transparent; }
.r > ul > li { display: flex; border-left: 1px dotted #888; }
.r > ul > li::before { content: ""; width: 10px; height: 8px; border-bottom: 1px dotted #888; flex: none; }
.r > ul > li:last-child { border-image: linear-gradient(#aaa 50%, transparent 50%) 1; }
.cur { background: #d9d9d9; display: flex; padding-right: 6px; }
.picked { background: #316ac5; display: flex; padding: 0 4px 0 1px; }
.vs, .hs { background: #f0f0f0; display: flex; align-items: center; flex: none; }
.vs { width: 15px; flex-direction: column; padding: 4px 0; }
.hs { height: 17px; padding: 0 4px; }
.thumb { background: #cdcdcd; display: block; }
.vs .thumb { width: 15px; margin: 4px 0 auto; }
.t1 { height: 77%; }
.t2 { height: 61%; }
.hs .thumb { height: 15px; margin: 0 4px; }
.side .hs .thumb { width: 102px; margin-right: 8px; }

/* component list */
.work { flex: 1; min-width: 0; display: flex; flex-direction: column; }
.panes { flex: 1; min-height: 0; display: flex; gap: 3px; padding-top: 2px; }
.comp { width: 184px; flex: none; display: flex; flex-direction: column; background: #fff; border-right: 2px solid #8a8f98; border-bottom: 1px solid #8a8f98; }
.search { display: flex; height: 29px; padding: 2px 1px 3px; border-bottom: 2px solid #80848c; }
.search input { width: 157px; border: 1px solid #707070; padding: 0 2px; background: #fff; }
.search input::placeholder, .find input::placeholder { color: #777; opacity: 1; }
.search button { width: 24px; display: grid; place-items: center; }
.comptree { border-left: 1px solid #8a8f98; padding-left: 6px; }

/* property sheet */
.props { flex: 1; min-width: 0; display: flex; flex-direction: column; background: #fff; border-left: 1px solid #d4d4d4; border-right: 3px solid #f0f0f0; }
.tabs { height: 18px; border-bottom: 1px solid #d4d4d4; flex: none; }
.tab { height: 18px; width: 63px; background: #fff; border-right: 1px solid #d4d4d4; }
.sheet { flex: 1; min-height: 0; padding: 4px 1px 3px 3px; }
.gridwrap { height: 100%; border: 1px solid #a0a0a8; display: flex; justify-content: space-between; padding: 1px; }
.gridwrap .vs { margin-right: 1px; }
.grid { width: 369px; table-layout: fixed; border-collapse: separate; border-spacing: 0; align-self: flex-start; }
.c1 { width: 21px; }
.c2 { width: 191px; }
.c3 { width: 126px; }
.c4 { width: 31px; }
.grid th { font-weight: 400; padding: 0; background: linear-gradient(#fcfcfc, #ececec); }
.grid tbody th { font-family: "Noto Sans CJK SC", sans-serif; font-feature-settings: "hwid"; }
.grid th, .grid td { border-right: 1px solid #b8b8b8; border-bottom: 1px solid #b8b8b8; height: 19px; line-height: 16px; white-space: nowrap; overflow: hidden; }
.grid thead th { height: 22px; }
.grid thead .hot { background: linear-gradient(#fad898, #f0be60); color: #580058; }
.grid td { padding: 0 2px; }
.grid td:nth-child(2) { padding-left: 20px; }
.grid td:last-child { text-align: center; }
.grid .blue { color: #0000f0; }
.grid .on th { background: #ffcf88; color: #580058; }
.grid .on td { background: #d9eaf8; }
.grid .on td:nth-child(2) { background: #0078d7; color: #fff; }
.grid .on td:last-child { background: #fff; }
.grid .grp td { color: #808080; }
.grid .grp td:nth-child(2) { padding-left: 3px; }
.grp button { width: 12px; height: 12px; border: 1px solid #a8a8a8; color: #000; line-height: 10px; margin-right: 5px; }
.grid input { appearance: none; width: 13px; height: 13px; border: 1px solid #222; margin: 0; vertical-align: middle; }
.rb { display: inline-block; width: 12px; height: 12px; vertical-align: -2px; }

/* status bar */
.status { display: flex; gap: 2px; height: 20px; flex: none; }
.status > span { border: 1px solid #d4d4d4; border-bottom: 0; background: linear-gradient(#fdfdfd, #f0f0f0); padding: 0 1px; line-height: 18px; white-space: nowrap; overflow: hidden; }
.s1 { width: 148px; }
.s2 { width: 78px; }
.s3 { width: 98px; }
.s4 { width: 48px; }
.s5 { flex: 1; }
.s6 { width: 70px; }

/* taskbar */
.taskbar { height: 40px; flex: none; display: flex; background: #04151a; color: #fff; }
.start { width: 48px; display: grid; place-items: center; background: #050808; }
.find { width: 344px; background: #f2f2f2; display: flex; align-items: center; gap: 8px; padding: 0 14px 0 9px; }
.find input { flex: 1; min-width: 0; border: 0; background: none; padding: 0; font-size: 14px; }
.find input::placeholder { color: #333; }
.apps { flex: 1; display: flex; padding-left: 3px; gap: 9px; }
.apps button { width: 42px; display: grid; place-items: center; border-bottom: 2px solid transparent; }
.apps .run { width: 40px; border-bottom-color: #76b9ed; }
.apps button:not(.run) + .run { margin-left: 2px; }
.apps svg { width: 24px; height: 24px; }
.apps .bellapp { width: 28px; height: 26px; }
.pdf { width: 24px; height: 24px; border: 1px solid #c8a890; border-radius: 3px; background: #c05c10; font: bold 10px/22px "Liberation Sans", sans-serif; }
.tscroll { width: 16px; background: #f0f0f0; display: grid; place-items: center; grid-template-rows: 17px 1fr; }
.tscroll svg:first-child { background: #d0d0d0; color: #000; width: 16px; height: 17px; padding: 3px; }
.tray { width: 444px; display: flex; align-items: center; padding-left: 23px; gap: 8px; }
.tray svg { width: 16px; height: 16px; }
.tray .kb { width: 24px; height: 14px; }
.tray .note { width: 24px; height: 24px; margin-left: 4px; }
.two { display: flex; flex-direction: column; text-align: center; line-height: 17px; }
.cpu { width: 70px; margin-left: 11px; }
.clock { width: 76px; }
.zh { width: 16px; text-align: center; margin-right: 4px; }
.one { font: bold 11px "Liberation Sans", sans-serif; fill: #fff; text-anchor: middle; }

/* floating input method bar */
.ball { position: absolute; left: 719px; top: -31px; width: 44px; height: 44px; border: 2px solid #d8d8d8; border-radius: 50%; background: #3cc060; color: #fff; text-align: center; line-height: 70px; }
.ime { position: absolute; z-index: 1; left: 681px; top: 7px; height: 26px; display: flex; align-items: center; gap: 6px; color: #1b74c8; }
.ime::before { content: ""; position: absolute; z-index: -1; left: 12px; right: -4px; top: 1px; bottom: 1px; background: #fff; border: 1px solid #a8c0dc; }
.ime svg { width: 16px; height: 16px; }
.ime .brand { width: 28px; height: 28px; }
.ime b { font-size: 14px; }

/* input helper */
.dialog { position: absolute; left: 711px; top: 195px; width: 490px; border: 1px solid #3c8ce0; background: #f0f0f0; box-shadow: 0 4px 14px rgba(0, 0, 0, .35); }
.dlg-title { display: flex; justify-content: space-between; height: 25px; background: #fff; padding: 0 10px 0 3px; line-height: 25px; }
.dlg-body { padding: 5px 7px 10px 5px; }
.expr { width: 475px; height: 27px; border: 1px solid #707070; background: #fff; text-align: center; font: bold 18px "Noto Sans", sans-serif; display: block; }
.cols { display: flex; gap: 6px; padding-top: 9px; }
.fmt { width: 252px; }
.desc { flex: 1; }
.desc h2 { padding-left: 9px; }
.cols h2 { height: 22px; line-height: 20px; }
.panel { height: 159px; border: 1px solid #a8a8b0; display: flex; flex-direction: column; justify-content: space-between; padding: 1px; }
.panel p { line-height: 17px; padding: 2px 1px; }
.opts li { line-height: 17px; height: 17px; padding-left: 3px; white-space: nowrap; overflow: hidden; }
.opts .sel { background: #cce0f0; }
.panel .thumb { width: 17px; }
.btns { display: flex; justify-content: flex-end; gap: 34px; padding: 12px 15px 0 0; }
.btns button { width: 58px; height: 20px; border: 1px solid #adadad; background: #e1e1e1; line-height: 16px; }
.btns .ok { border: 2px solid #0078d7; }
.mark { position: absolute; left: 833px; top: 204px; width: 391px; height: 201px; border: 7px solid #f00; }
```
